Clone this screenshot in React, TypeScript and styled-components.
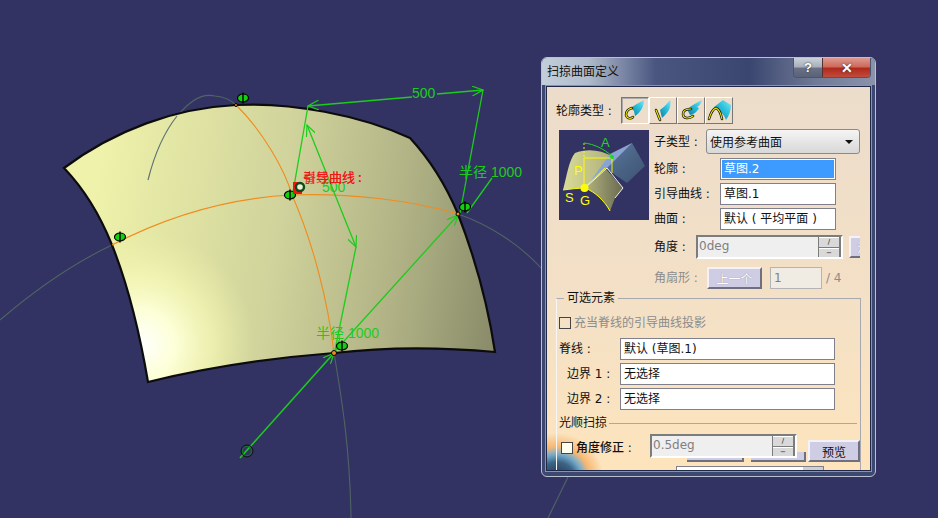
import styled, { createGlobalStyle } from "styled-components";

const GlobalStyle = createGlobalStyle`
  html, body {
    margin: 0;
    padding: 0;
    background: #333363;
  }
`;

const UI_FONT = `"DejaVu Sans", "Noto Sans CJK SC", sans-serif`;

const Stage = styled.main`
  position: relative;
  width: 938px;
  height: 518px;
  overflow: hidden;
  background: #333363;
`;
const CadCanvas = styled.svg`
  display: block;
  width: 938px;
  height: 518px;
`;
const Dialog = styled.section`
  position: absolute;
  left: 541px;
  top: 57px;
  width: 335px;
  height: 420px;
  box-sizing: border-box;
  display: flex;
  flex-direction: column;
  border: 1px solid #b9c0d0;
  border-radius: 6px;
  background: #3c4870;
  font-family: ${UI_FONT};
  font-size: 12px;
  color: #111;
  overflow: hidden;
`;
const TitleBar = styled.header`
  height: 27px;
  flex: none;
  display: flex;
  align-items: flex-start;
  justify-content: space-between;
  background: linear-gradient(90deg, #c3cedb 0, #aebbcc 14%, #4a5680 34%, #3a4570 62%, #6f7a96 82%, #8a93aa 100%);
`;
const Title = styled.h1`
  margin: 6px 0 0 5px;
  font-size: 12px;
  line-height: 16px;
  font-weight: 400;
  color: #111;
`;
const CaptionButtons = styled.div`
  display: flex;
  margin-right: 4px;
  height: 19px;
  border: 1px solid #4d556e;
  border-top: none;
  border-radius: 0 0 4px 4px;
  overflow: hidden;
`;
const CaptionButton = styled.div<{ $close?: boolean }>`
  width: ${(p) => (p.$close ? "47px" : "28px")};
  display: flex;
  align-items: center;
  justify-content: center;
  font-family: "Liberation Sans", sans-serif;
  font-weight: 700;
  font-size: ${(p) => (p.$close ? "14px" : "13px")};
  color: #fff;
  text-shadow: 0 0 2px #222;
  border-left: ${(p) => (p.$close ? "1px solid #5a3030" : "none")};
  background: ${(p) =>
    p.$close
      ? "linear-gradient(180deg, #dc9a90 0, #cf6a5c 45%, #b02a1c 55%, #c04c3c 100%)"
      : "linear-gradient(180deg, #ccd2da 0, #aab0bc 45%, #6a7186 55%, #5a6278 100%)"};
`;
const Panel = styled.div`
  position: relative;
  flex: 1;
  margin: 1px 4px 5px 4px;
  padding: 10px 0 0 9px;
  border: 1px solid #1f2848;
  box-shadow: 0 0 0 1px #8a93aa;
  background: linear-gradient(180deg, #ecdccb 0, #f3e0c6 55%, #fde4bc 100%);
  overflow: hidden;
`;
const Earth = styled.div`
  position: absolute;
  left: 0;
  bottom: 0;
  width: 70px;
  height: 44px;
  background: radial-gradient(circle at 10px 54px, #1c2a46 0, #3c6484 18px, #6fa6c8 25px, #a9b4b0 29px, #f7b771 33px, rgba(253, 228, 188, 0) 47px);
`;
const TypeRow = styled.div`
  position: relative;
  display: flex;
  align-items: center;
  height: 27px;
`;
const Label = styled.span<{ $disabled?: boolean; $width?: number; $indent?: number; $strong?: boolean }>`
  flex: none;
  width: ${(p) => (p.$width ? `${p.$width}px` : "auto")};
  padding-left: ${(p) => p.$indent ?? 0}px;
  box-sizing: border-box;
  white-space: nowrap;
  line-height: 16px;
  color: ${(p) => (p.$disabled ? "#8c8c8c" : "#111")};
  font-weight: ${(p) => (p.$strong ? 500 : 400)};
`;
const TypeButton = styled.div<{ $pressed?: boolean }>`
  width: 28px;
  height: 27px;
  box-sizing: border-box;
  border: 1px solid;
  border-color: ${(p) =>
    p.$pressed ? "#777 #fff #fff #777" : "#fff #777 #777 #fff"};
  box-shadow: ${(p) => (p.$pressed ? "inset 1px 1px 0 #aaa" : "none")};
`;
const TypeIcon = styled.svg`
  display: block;
  width: 26px;
  height: 25px;
`;
const TopGrid = styled.div`
  position: relative;
  display: flex;
  align-items: flex-start;
  margin-top: 5px;
`;
const Preview = styled.svg`
  display: block;
  flex: none;
  width: 90px;
  height: 90px;
  margin: 1px 5px 0 3px;
  background: #333363;
`;
const Form = styled.div`
  width: 206px;
  flex: none;
  display: flex;
  flex-direction: column;
  overflow: hidden;
`;
const FormRow = styled.div<{ $top?: number }>`
  display: flex;
  align-items: center;
  margin-top: ${(p) => p.$top ?? 3}px;
`;
const Select = styled.div`
  flex: 1;
  height: 25px;
  box-sizing: border-box;
  display: flex;
  align-items: center;
  justify-content: space-between;
  padding: 0 6px 0 3px;
  margin-left: 14px;
  border: 1px solid #8a8a8a;
  border-radius: 3px;
  background: linear-gradient(180deg, #f5f5f5 0, #e6e6e6 50%, #d8d8d8 100%);
`;
const Caret = styled.i`
  width: 0;
  height: 0;
  border-left: 4px solid transparent;
  border-right: 4px solid transparent;
  border-top: 4px solid #111;
`;
const TextField = styled.div<{ $width: number; $selected?: boolean; $disabled?: boolean; $left?: number }>`
  flex: none;
  width: ${(p) => p.$width}px;
  height: 22px;
  box-sizing: border-box;
  margin-left: ${(p) => p.$left ?? 0}px;
  border: 1px solid ${(p) => (p.$disabled ? "#b4b4b4" : "#80808c")};
  background: ${(p) => (p.$disabled ? "#f0ece4" : "#fff")};
  padding: 2px 3px;
  line-height: 16px;
  white-space: nowrap;
  overflow: hidden;
  color: ${(p) => (p.$disabled ? "#808080" : "#111")};
`;
const SelectedText = styled.div`
  margin: -1px -2px;
  padding: 1px 2px;
  height: 18px;
  box-sizing: border-box;
  background: #3d9bff;
  color: #fff;
  line-height: 16px;
`;
const Spin = styled.div<{ $width: number }>`
  flex: none;
  align-self: flex-start;
  width: ${(p) => p.$width}px;
  height: 24px;
  box-sizing: border-box;
  display: flex;
  justify-content: space-between;
  border: 2px solid;
  border-color: #7c7c7c #fff #fff #7c7c7c;
  background: #efefef;
  color: #808080;
  line-height: 19px;
  padding-left: 1px;
`;
const Stepper = styled.div`
  flex: none;
  width: 20px;
  display: flex;
  flex-direction: column;
  gap: 1px;
  background: #7c7c7c;
  border-left: 1px solid #7c7c7c;
  border-right: 2px solid #7c7c7c;
`;
const StepButton = styled.div`
  flex: 1;
  display: flex;
  align-items: center;
  justify-content: center;
  background: #d9d9d9;
  color: #111;
  font-size: 7px;
  line-height: 8px;
  border-top: 1px solid #fff;
`;
const PushButton = styled.div<{ $width: number; $disabled?: boolean; $left?: number; $bottom?: boolean }>`
  flex: none;
  width: ${(p) => p.$width}px;
  height: 22px;
  box-sizing: border-box;
  margin-left: ${(p) => p.$left ?? 0}px;
  align-self: ${(p) => (p.$bottom ? "flex-end" : "auto")};
  display: flex;
  align-items: center;
  justify-content: center;
  white-space: nowrap;
  border: 2px solid;
  border-color: #f4f2f8 #6f6f80 #6f6f80 #f4f2f8;
  background: #cfcde4;
  color: ${(p) => (p.$disabled ? "#fff" : "#111")};
  text-shadow: ${(p) => (p.$disabled ? "0 0 1px #77778a" : "none")};
`;
const Options = styled.fieldset`
  position: relative;
  width: 304px;
  height: 200px;
  box-sizing: border-box;
  margin: 1px 0 0 0;
  padding: 0 0 0 2px;
  border: 1px solid #a8a8b0;
  border-left-color: #f6f6f6;
  border-bottom: none;
`;
const Legend = styled.legend`
  margin-left: 5px;
  padding: 0 3px;
  line-height: 16px;
`;
const CheckRow = styled.label<{ $top?: number; $indent?: number }>`
  display: flex;
  align-items: center;
  gap: 3px;
  margin-top: ${(p) => p.$top ?? 0}px;
  padding-left: ${(p) => p.$indent ?? 0}px;
`;
const Check = styled.i<{ $filled?: boolean }>`
  flex: none;
  width: 12px;
  height: 12px;
  box-sizing: border-box;
  border: 1px solid #444;
  background: ${(p) => (p.$filled ? "#fffff0" : "transparent")};
`;
const FieldRow = styled.div<{ $top: number }>`
  display: flex;
  align-items: center;
  margin-top: ${(p) => p.$top}px;
`;
const Section = styled.div`
  display: flex;
  align-items: center;
  gap: 2px;
  margin-top: 5px;
  padding-right: 3px;
  &::after {
    content: "";
    flex: 1;
    height: 1px;
    background: #a8a8b0;
  }
`;
const SmoothRow = styled.div`
  position: relative;
  z-index: 1;
  display: flex;
  align-items: center;
  height: 28px;
  margin-top: 3px;
`;
const HiddenButtons = styled.div`
  display: flex;
  gap: 7px;
  height: 10px;
  margin: -10px 0 0 128px;
`;
const HiddenButton = styled.div<{ $width: number }>`
  width: ${(p) => p.$width}px;
  background: #cfcde4;
  border-bottom: 2px solid #6f6f80;
  border-right: 2px solid #6f6f80;
`;
const HiddenCombo = styled.div`
  width: 146px;
  height: 6px;
  margin: 4px 0 0 117px;
  border: 1px solid #80808c;
  background: linear-gradient(90deg, #fff 0, #fff 86%, #d0d0d0 86%);
`;

const wings = [
  "M9 10 C12 7 17 5 22 2 C22 8 19 14 13 18 L12 13 Z",
  "M10 12 C14 9 17 6 20 2 C22 9 18 15 12 20 Z",
  "M9 11 C13 8 18 5 24 2 C23 6 21 8 19 9 L21 10 C19 14 15 17 12 17 Z",
  "M8 9 L17 2 L25 7 C25 12 23 18 20 22 C18 16 13 12 8 9 Z",
];
const curves = [
  "M10 10 C6 11 4 14 4 17 C5 21 9 21 11 19",
  "M6 12 L10 22",
  "M13 11 C8 11 5 13 5 16 C5 21 11 21 15 18",
  "M3 21 C5 14 7 11 10 10 C13 11 15 16 16 21",
];

const TypeGlyph = ({ index }: { index: number }) => (
  <TypeIcon viewBox="0 0 26 25">
    <defs>
      <linearGradient id={`wing${index}`} x1="0" y1="1" x2="1" y2="0">
        <stop offset="0" stopColor="#0e7e9e" />
        <stop offset="0.6" stopColor="#2fc4e0" />
        <stop offset="1" stopColor="#8ce4f2" />
      </linearGradient>
    </defs>
    <path d={wings[index]} fill={`url(#wing${index})`} />
    <path d={curves[index]} fill="none" stroke="#111" strokeWidth="2.5" strokeLinecap="round" />
    <path d={curves[index]} fill="none" stroke="#f4f000" strokeWidth="1.1" strokeLinecap="round" />
  </TypeIcon>
);

const PreviewArt = () => (
  <Preview viewBox="0 0 90 90">
    <defs>
      <linearGradient id="prevLeft" x1="0" y1="0" x2="1" y2="0">
        <stop offset="0" stopColor="#d9db98" />
        <stop offset="1" stopColor="#aeb07a" />
      </linearGradient>
      <linearGradient id="prevRight" x1="0" y1="0" x2="1" y2="0">
        <stop offset="0" stopColor="#b2b47e" />
        <stop offset="1" stopColor="#6a6a50" />
      </linearGradient>
      <linearGradient id="prevPlane" x1="0" y1="0" x2="1" y2="1">
        <stop offset="0" stopColor="#5a7a9e" />
        <stop offset="1" stopColor="#3c5070" />
      </linearGradient>
    </defs>
    <path d="M53 26 L73 13 L86 36 L68 53 L46 38 Z" fill="url(#prevPlane)" />
    <path d="M4 60 C8 45 10 30 16 23 C28 18 42 20 53 26 L46 38 L26 58 C18 58 10 59 4 60 Z" fill="url(#prevLeft)" />
    <path d="M26 58 L46 38 L64 58 L56 68 L51 81 C45 70 36 62 26 58 Z" fill="url(#prevRight)" />
    <path d="M28 56 L51 24 L73 13 L48 38 Z" fill="#8aa4d2" />
    <path d="M25 28 H53 V43 M25 28 V58 M25 58 L46 38" fill="none" stroke="#ffff00" strokeWidth="0.9" />
    <path d="M25 13 V28" fill="none" stroke="#ffff00" strokeWidth="0.9" strokeDasharray="2 2" />
    <path d="M26 58 L48 38 L64 58 L56 68" fill="none" stroke="#fff" strokeWidth="0.9" />
    <path d="M25 13 C35 14 45 19 53 26" fill="none" stroke="#1ed81e" strokeWidth="1" />
    <circle cx="53" cy="27" r="2" fill="#1ed81e" />
    <path d="M4 60 C12 59 20 58 26 58 C36 62 45 70 51 81" fill="none" stroke="#ffff00" strokeWidth="1" />
    <circle cx="25.5" cy="58" r="4" fill="#ffff00" />
    <g fill="#ffff00" fontFamily="Liberation Sans, sans-serif" fontSize="13">
      <text x="15" y="45">P</text>
      <text x="6" y="72">S</text>
      <text x="21" y="75">G</text>
      <text x="42" y="17" fill="#1ed81e">A</text>
    </g>
  </Preview>
);

const Handle = ({ x, y }: { x: number; y: number }) => (
  <g transform={`translate(${x} ${y})`}>
    <ellipse rx="5.5" ry="4" fill="#10d010" stroke="#000" strokeWidth="1.2" />
    <path d="M0 -5.5 V5.5" stroke="#000" strokeWidth="1.4" />
  </g>
);

const CadScene = () => (
  <CadCanvas viewBox="0 0 938 518">
    <defs>
      <linearGradient id="surfaceBase" gradientUnits="userSpaceOnUse" x1="90" y1="230" x2="500" y2="290">
        <stop offset="0" stopColor="#eef2aa" />
        <stop offset="0.45" stopColor="#d0d39b" />
        <stop offset="0.75" stopColor="#b0b285" />
        <stop offset="1" stopColor="#8a8c6a" />
      </linearGradient>
      <radialGradient id="surfaceGlow" gradientUnits="userSpaceOnUse" cx="140" cy="345" r="115">
        <stop offset="0" stopColor="#ffffff" />
        <stop offset="0.3" stopColor="#fdffd8" />
        <stop offset="0.6" stopColor="#f6f9b8" stopOpacity="0.7" />
        <stop offset="1" stopColor="#eef2aa" stopOpacity="0" />
      </radialGradient>
      <clipPath id="surfaceClip">
        <path d="M64 168 C115 130 175 108 236 105 C290 102 360 115 410 138 C435 165 450 195 458 214 C475 258 488 305 495 352 C440 347 385 347 334 353 C270 358 205 368 148 382 C140 335 130 290 112 245 C100 215 85 190 64 168 Z" />
      </clipPath>
      <marker id="head" viewBox="0 0 12 10" refX="11" refY="5" markerWidth="12" markerHeight="10" markerUnits="userSpaceOnUse" orient="auto-start-reverse">
        <path d="M0 0 L11 5 L0 10" fill="none" stroke="#1ccc1c" strokeWidth="1.2" />
      </marker>
    </defs>

    <g fill="none" stroke="#4f6464" strokeWidth="1.1">
      <path d="M148 180 C160 130 190 90 215 96 C225 97 232 101 236 105" />
      <path d="M0 320 C35 290 70 265 112 245" />
      <path d="M458 214 C490 225 520 245 541 268" />
      <path d="M334 353 C342 400 350 450 351 518" />
      <path d="M568 477 L548 518" />
    </g>

    <g clipPath="url(#surfaceClip)">
      <rect x="60" y="100" width="440" height="290" fill="url(#surfaceBase)" />
      <rect x="60" y="100" width="440" height="290" fill="url(#surfaceGlow)" />
    </g>
    <path d="M148 180 C153 160 162 135 177 116" fill="none" stroke="#5f7474" strokeWidth="1.2" />
    <path
      d="M64 168 C115 130 175 108 236 105 C290 102 360 115 410 138 C435 165 450 195 458 214 C475 258 488 305 495 352 C440 347 385 347 334 353 C270 358 205 368 148 382 C140 335 130 290 112 245 C100 215 85 190 64 168 Z"
      fill="none"
      stroke="#0c0c0c"
      strokeWidth="2.2"
    />

    <g fill="none" stroke="#f08c1e" strokeWidth="1.1">
      <path d="M112 245 C170 215 230 198 292 195 C350 193 410 200 458 214" />
      <path d="M236 105 C262 130 285 170 292 195 C312 240 328 300 334 353" />
    </g>

    <g fill="none" stroke="#1ccc1c" strokeWidth="1.3">
      <path d="M293 192 L308 106" />
      <path d="M483 90 L460 213" />
      <path d="M467 213 L492 178" />
      <path d="M356 247 L335 350" />
      <path d="M412 97 L308 106" markerEnd="url(#head)" />
      <path d="M437 94 L483 90" markerEnd="url(#head)" />
      <path d="M307 125 L356 247" markerStart="url(#head)" markerEnd="url(#head)" />
      <path d="M336 350 L458 215" markerStart="url(#head)" markerEnd="url(#head)" />
      <path d="M240 458 L334 353" markerEnd="url(#head)" strokeWidth="1.6" />
    </g>

    <circle cx="334" cy="353" r="2.5" fill="#f08c1e" stroke="#000" />
    <circle cx="458" cy="214" r="2" fill="#f08c1e" stroke="#000" />
    <circle cx="236" cy="105" r="1.5" fill="#f08c1e" stroke="#000" />

    <Handle x={243} y={98} />
    <Handle x={120} y={237} />
    <Handle x={465} y={207} />
    <Handle x={342} y={346} />
    <Handle x={290} y={195} />
    <rect x="293" y="182" width="9" height="12" fill="#f01414" />
    <circle cx="300" cy="187" r="4" fill="#f0f0d0" stroke="#0d4a1d" strokeWidth="2.4" />
    <circle cx="247" cy="451" r="4.5" fill="none" stroke="#0f7a1a" strokeWidth="1.2" />
    <circle cx="247" cy="451" r="6" fill="none" stroke="#111" strokeWidth="1" />

    <g fontFamily="'Liberation Sans', 'Noto Sans CJK SC', sans-serif" fontSize="14" fill="#1ccc1c">
      <text x="412" y="98">500</text>
      <text x="322" y="192">500</text>
      <text x="459" y="177">半径 1000</text>
      <text x="316" y="338">半径 1000</text>
    </g>
    <g fontFamily="'Noto Sans CJK SC', sans-serif" fontSize="13" fill="#f01414">
      <text x="303" y="182">引导曲线 :</text>
      <text x="303" y="182" opacity="0.8">脊线曲线 :</text>
    </g>
  </CadCanvas>
);

const App = () => {
  return (
    <Stage>
      <GlobalStyle />
      <CadScene />
      <Dialog>
        <TitleBar>
          <Title>扫掠曲面定义</Title>
          <CaptionButtons>
            <CaptionButton>?</CaptionButton>
            <CaptionButton $close>✕</CaptionButton>
          </CaptionButtons>
        </TitleBar>
        <Panel>
          <Earth />
          <TypeRow>
            <Label $width={65}>轮廓类型 :</Label>
            {[0, 1, 2, 3].map((i) => (
              <TypeButton key={i} $pressed={i === 0}>
                <TypeGlyph index={i} />
              </TypeButton>
            ))}
          </TypeRow>
          <TopGrid>
            <PreviewArt />
            <Form>
              <FormRow $top={0}>
                <Label $width={38}>子类型 :</Label>
                <Select>
                  使用参考曲面
                  <Caret />
                </Select>
              </FormRow>
              <FormRow $top={4}>
                <Label $width={66}>轮廓 :</Label>
                <TextField $width={116}>
                  <SelectedText>草图.2</SelectedText>
                </TextField>
              </FormRow>
              <FormRow>
                <Label $width={66}>引导曲线 :</Label>
                <TextField $width={116}>草图.1</TextField>
              </FormRow>
              <FormRow>
                <Label $width={66}>曲面 :</Label>
                <TextField $width={116}>默认 ( 平均平面 )</TextField>
              </FormRow>
              <FormRow $top={5}>
                <Label $width={42}>角度 :</Label>
                <Spin $width={147}>
                  0deg
                  <Stepper>
                    <StepButton>/</StepButton>
                    <StepButton>−</StepButton>
                  </Stepper>
                </Spin>
                <PushButton $width={40} $disabled $left={6}>
                  法线
                </PushButton>
              </FormRow>
              <FormRow $top={8}>
                <Label $width={53} $disabled>
                  角扇形 :
                </Label>
                <PushButton $width={55} $disabled>
                  上一个
                </PushButton>
                <TextField $width={52} $disabled $left={8}>
                  1
                </TextField>
                <Label $disabled $indent={4}>
                  / 4
                </Label>
              </FormRow>
            </Form>
          </TopGrid>
          <Options>
            <Legend>可选元素</Legend>
            <CheckRow $top={9}>
              <Check />
              <Label $disabled>充当脊线的引导曲线投影</Label>
            </CheckRow>
            <FieldRow $top={7}>
              <Label $width={61}>脊线 :</Label>
              <TextField $width={215}>默认 (草图.1)</TextField>
            </FieldRow>
            <FieldRow $top={3}>
              <Label $width={61} $indent={8}>
                边界 1 :
              </Label>
              <TextField $width={215}>无选择</TextField>
            </FieldRow>
            <FieldRow $top={3}>
              <Label $width={61} $indent={8}>
                边界 2 :
              </Label>
              <TextField $width={215}>无选择</TextField>
            </FieldRow>
            <Section>
              <Label>光顺扫掠</Label>
            </Section>
            <SmoothRow>
              <CheckRow $indent={2}>
                <Check $filled />
                <Label $width={74} $strong>
                  角度修正 :
                </Label>
              </CheckRow>
              <Spin $width={147}>
                0.5deg
                <Stepper>
                  <StepButton>/</StepButton>
                  <StepButton>−</StepButton>
                </Stepper>
              </Spin>
              <PushButton $width={52} $left={11} $bottom>
                预览
              </PushButton>
            </SmoothRow>
            <HiddenButtons>
              <HiddenButton $width={55} />
              <HiddenButton $width={53} />
            </HiddenButtons>
            <HiddenCombo />
          </Options>
        </Panel>
      </Dialog>
    </Stage>
  );
};

export default App;
